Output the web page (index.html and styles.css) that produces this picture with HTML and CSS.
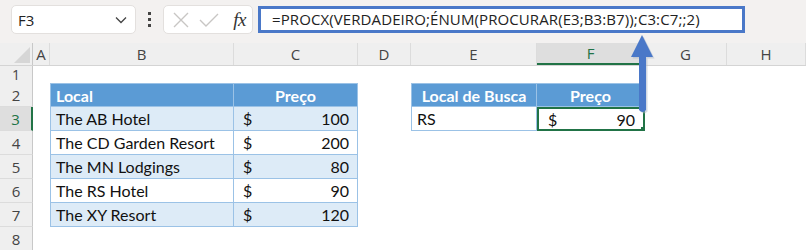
FILE: index.html
```html
<!DOCTYPE html>
<html>
<head>
	<title>PROCX ÉNUM PROCURAR</title>
	<link rel="stylesheet" href="styles.css">
</head>
<body>
	<div class="toolbar">
		<div class="namebox">
			<span>F3</span>
			<svg width="12" height="8" viewBox="0 0 12 8"><path d="M1 1.5 L6 6.5 L11 1.5" fill="none" stroke="#444" stroke-width="1.3"/></svg>
		</div>
		<div class="dots"><i></i><i></i><i></i></div>
		<div class="fxbox">
			<svg width="18" height="18" viewBox="0 0 18 18"><path d="M2 2 L16 16 M16 2 L2 16" stroke="#c8c6c4" stroke-width="1.4"/></svg>
			<svg width="20" height="16" viewBox="0 0 20 16"><path d="M1 8 L7 14 L19 2" fill="none" stroke="#c8c6c4" stroke-width="1.4"/></svg>
			<span class="fx">fx</span>
		</div>
		<div class="formula">=PROCX(VERDADEIRO;ÉNUM(PROCURAR(E3;B3:B7));C3:C7;;2)</div>
	</div>

	<div class="sheet">
		<div class="row head">
			<div class="corner"><svg width="16" height="16" viewBox="0 0 16 16"><path d="M16 0 L16 16 L0 16 Z" fill="#d6d6d6"/></svg></div>
			<div>A</div><div>B</div><div>C</div><div>D</div><div>E</div><div class="sel">F</div><div>G</div><div>H</div>
		</div>
		<div class="row r1">
			<div class="num">1</div>
		</div>
		<div class="row">
			<div class="num">2</div><div></div>
			<div class="th first">Local</div><div class="th center">Preço</div>
			<div></div>
			<div class="th first center">Local de Busca</div><div class="th center">Preço</div>
		</div>
		<div class="row">
			<div class="num sel">3</div><div></div>
			<div class="td first band">The AB Hotel</div><div class="td money band"><span>$</span><span>100</span></div>
			<div></div>
			<div class="td first">RS</div><div class="td money active"><span>$</span><span>90</span></div>
		</div>
		<div class="row">
			<div class="num">4</div><div></div>
			<div class="td first">The CD Garden Resort</div><div class="td money"><span>$</span><span>200</span></div>
		</div>
		<div class="row">
			<div class="num">5</div><div></div>
			<div class="td first band">The MN Lodgings</div><div class="td money band"><span>$</span><span>80</span></div>
		</div>
		<div class="row">
			<div class="num">6</div><div></div>
			<div class="td first">The RS Hotel</div><div class="td money"><span>$</span><span>90</span></div>
		</div>
		<div class="row">
			<div class="num">7</div><div></div>
			<div class="td first band">The XY Resort</div><div class="td money band"><span>$</span><span>120</span></div>
		</div>
		<div class="row">
			<div class="num">8</div>
		</div>
	</div>

	<svg class="arrow" width="30" height="90" viewBox="0 0 30 90">
		<path d="M14 1 L25 23 L18 23 L18 76 Q14.5 80 11 76 L11 23 L3 23 Z" fill="#aab6c8" opacity="0.5" transform="translate(1.5 1.5)"/>
		<path d="M14 1 L25 23 L18 23 L18 76 Q14.5 80 11 76 L11 23 L3 23 Z" fill="#4a78c8"/>
	</svg>
</body>
</html>
```

FILE: styles.css
```css
body {
	margin: 0;
	width: 806px;
	height: 250px;
	overflow: hidden;
	position: relative;
	background: #fff;
	font-family: "Open Sans", "Noto Sans", sans-serif;
}
.toolbar {
	height: 43px;
	box-sizing: border-box;
	background: #f3f1f0;
	display: flex;
	align-items: flex-start;
	padding: 5px 0 0 11px;
}
.namebox {
	width: 125px;
	height: 29px;
	box-sizing: border-box;
	background: #fff;
	border: 1px solid #e3e0de;
	border-radius: 5px;
	display: flex;
	align-items: center;
	justify-content: space-between;
	padding: 0 8px 0 6px;
	font-size: 15px;
	color: #222;
}
.dots {
	width: 27px;
	height: 29px;
	display: flex;
	flex-direction: column;
	align-items: center;
	justify-content: center;
	gap: 3px;
}
.dots i {
	width: 3px;
	height: 3px;
	background: #444;
}
.fxbox {
	width: 90px;
	height: 29px;
	box-sizing: border-box;
	background: #fff;
	border: 1px solid #e3e0de;
	border-radius: 5px;
	display: flex;
	align-items: center;
	padding: 0 6px 0 8px;
	gap: 9px;
}
.fx {
	font: italic 19px "Liberation Serif", serif;
	color: #333;
	margin-left: auto;
	letter-spacing: -0.5px;
}
.formula {
	margin: 1px 0 0 5px;
	width: 487px;
	height: 27px;
	box-sizing: border-box;
	border: 3px solid #4a78c8;
	background: #fff;
	padding-left: 11px;
	font-size: 15px;
	line-height: 21px;
	letter-spacing: 0.1px;
	color: #222;
	white-space: nowrap;
}
.row {
	display: grid;
	grid-template-columns: 33px 17px 184px 124px 53px 126px 108px 82px 79px;
	height: 24px;
}
.row > div {
	box-sizing: border-box;
	display: flex;
	align-items: center;
	overflow: hidden;
	white-space: nowrap;
}
.head {
	height: 23px;
	background: #efefef;
	border-bottom: 1px solid #d4d4d4;
	box-sizing: border-box;
}
.head > div {
	justify-content: center;
	font-size: 15px;
	color: #444;
	border-right: 1px solid #dcdcdc;
}
.head .corner {
	justify-content: flex-end;
	align-items: flex-end;
	padding: 0 2px 2px 0;
	border-right: 1px solid #c8c8c8;
}
.head .sel {
	background: #dedede;
	color: #217346;
	border-bottom: 2px solid #217346;
}
.r1 {
	height: 17px;
}
.r1 .num {
	line-height: 17px;
	font-size: 14px;
	overflow: visible;
}
.num {
	background: #efefef;
	border-right: 1px solid #c8c8c8;
	border-bottom: 1px solid #dcdcdc;
	justify-content: center;
	font-size: 15px;
	color: #444;
}
.num.sel {
	background: #dedede;
	color: #217346;
	border-right: 2px solid #217346;
}
.th, .td {
	font-family: "Lato", "Liberation Sans", sans-serif;
	font-size: 16px;
	border-right: 1px solid #9bc2e6;
	border-bottom: 1px solid #9bc2e6;
	padding: 0 5px;
}
.th {
	background: #5b9bd5;
	color: #fff;
	font-weight: bold;
	border-top: 1px solid #9bc2e6;
}
.first {
	border-left: 1px solid #9bc2e6;
}
.center {
	justify-content: center;
}
.td {
	color: #111;
	background: #fff;
}
.band {
	background: #ddebf7;
}
.money {
	justify-content: space-between;
	padding: 0 8px 0 9px;
}
.active {
	border: 2px solid #217346;
	position: relative;
}
.active::after {
	content: "";
	position: absolute;
	right: -4px;
	bottom: -4px;
	width: 5px;
	height: 5px;
	background: #217346;
	border: 1px solid #fff;
}
.arrow {
	position: absolute;
	left: 628px;
	top: 34px;
}
```
